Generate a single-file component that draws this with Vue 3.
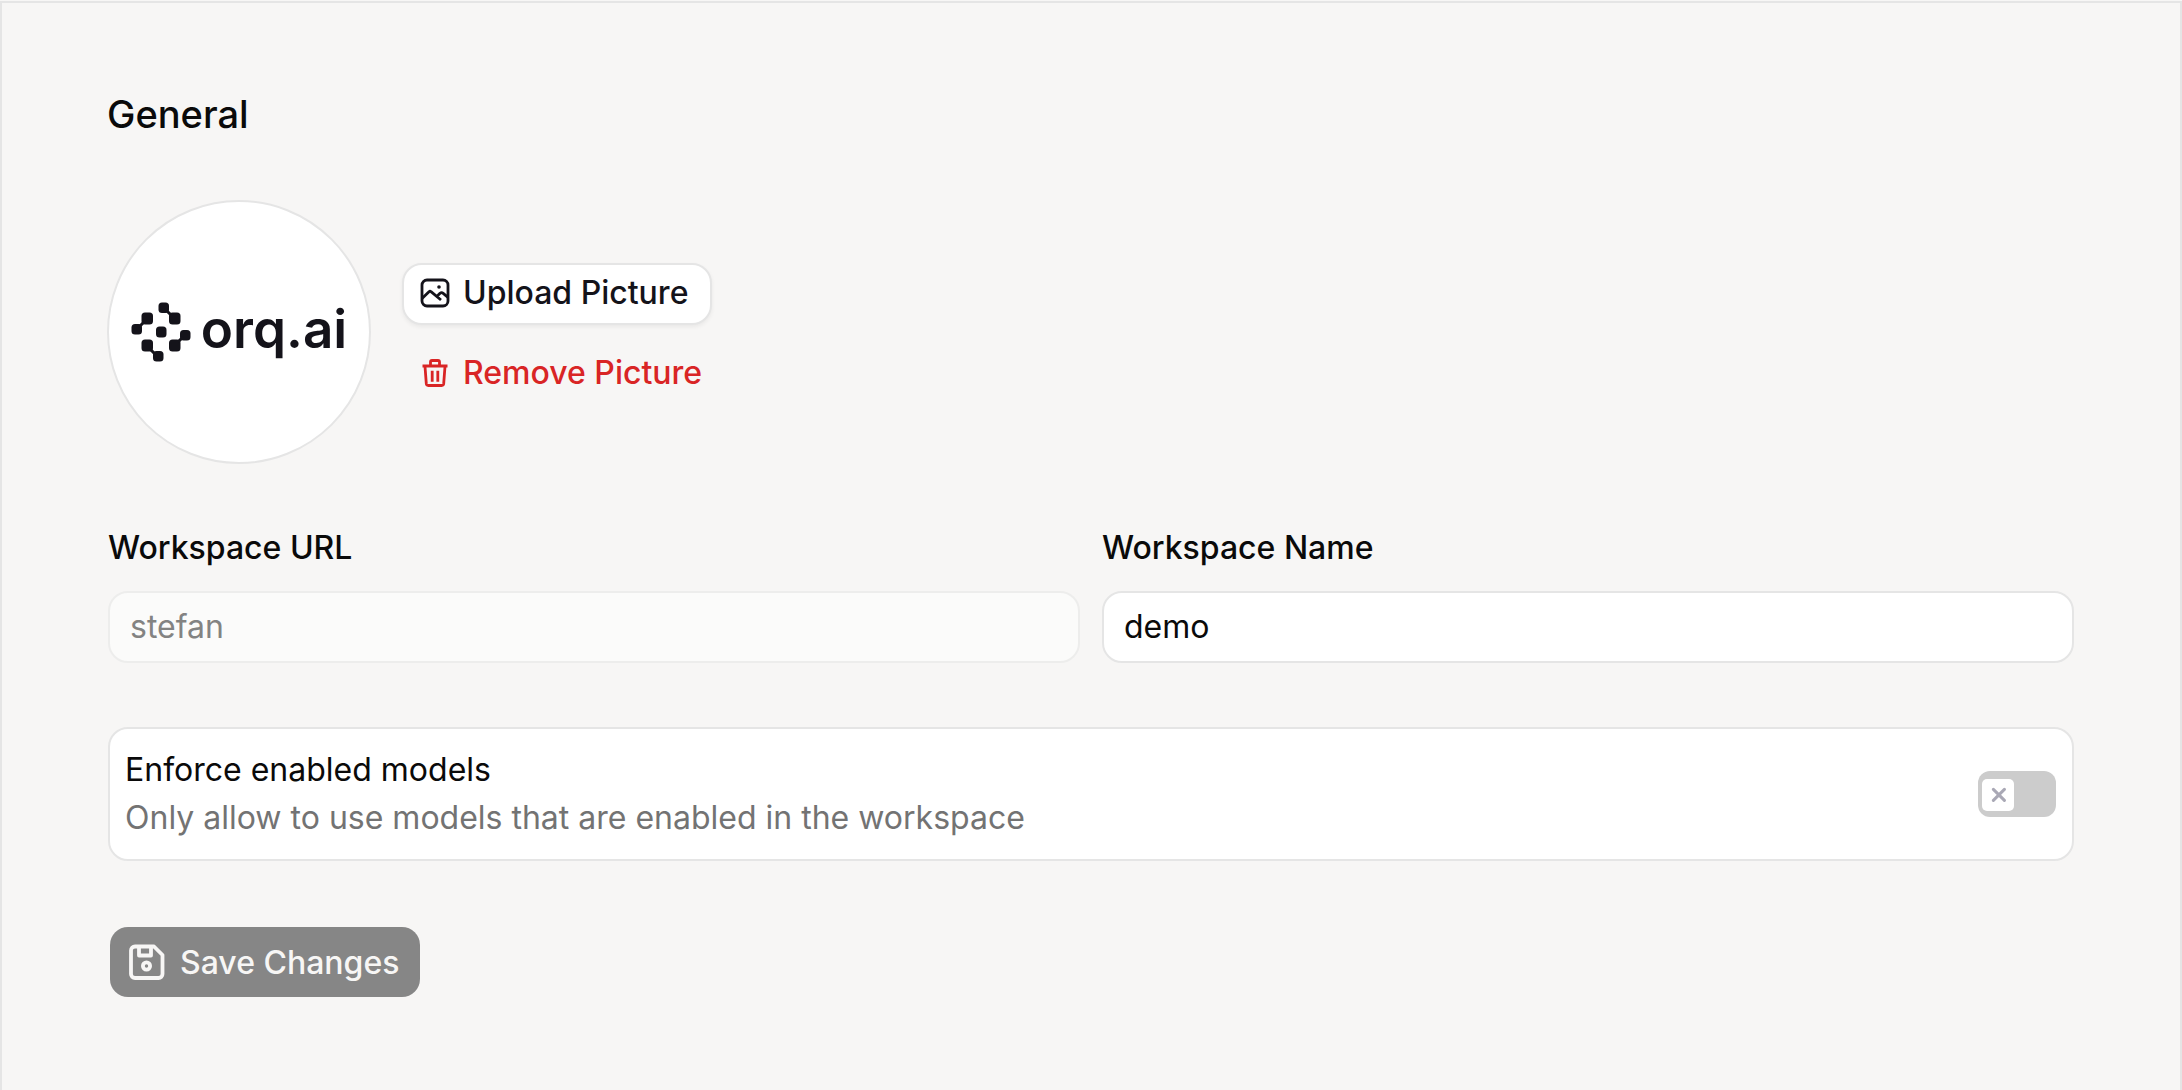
<template>
  <main class="settings">
    <h1 class="title">General</h1>

    <section class="picture">
      <div class="avatar">
        <div class="brand">
          <svg class="brand-mark" viewBox="0 0 60 60" aria-hidden="true">
            <g fill="currentColor" stroke="none">
              <rect x="27.5" y="0.5" width="10.5" height="10.5" rx="3.5" />
              <rect x="38" y="10.5" width="11.5" height="12" rx="3.5" />
              <rect x="10.5" y="10.5" width="11.5" height="12" rx="3.5" />
              <rect x="0.5" y="22" width="10.5" height="10.5" rx="3.5" />
              <rect x="25" y="24.5" width="10.5" height="11" rx="3.5" />
              <rect x="49" y="28" width="10.5" height="10.5" rx="3.5" />
              <rect x="38" y="37.5" width="11.5" height="12" rx="3.5" />
              <rect x="10.5" y="37.5" width="11.5" height="12" rx="3.5" />
              <rect x="22" y="49" width="10.5" height="10.5" rx="3.5" />
            </g>
            <path
              d="M35.5 8.5l5 5M13 20l-5 5M19 47l5 5M47 40l5-5"
              fill="none"
              stroke="currentColor"
              stroke-width="3"
            />
          </svg>
          <span class="brand-name">orq.ai</span>
        </div>
      </div>

      <div class="picture-actions">
        <button type="button" class="btn upload-btn">
          <svg viewBox="0 0 32 32" class="icon" aria-hidden="true">
            <rect x="3" y="3" width="26" height="26" rx="5" />
            <path d="M3 21.500l7-6.800a1.500 1.500 0 0 1 2 0L22 23M18.500 18.800l2.500-2.500a2.500 2.500 0 0 1 3.200 0l4.800 4" />
            <circle cx="20" cy="10" r="1.800" class="dot" />
          </svg>
          Upload Picture
        </button>
        <button type="button" class="btn remove-btn">
          <svg viewBox="0 0 32 32" class="icon" aria-hidden="true">
            <path d="M3.500 9h25M11.500 8.500V5a1.500 1.500 0 0 1 1.500-1.500h6A1.500 1.500 0 0 1 20.500 5v3.500M6 9.500l1.300 17.200a2 2 0 0 0 2 1.800h13.400a2 2 0 0 0 2-1.800L26 9.500M13.200 13.700v11M18.800 13.700v11" />
          </svg>
          Remove Picture
        </button>
      </div>
    </section>

    <form class="form" @submit.prevent>
      <div class="fields">
        <div class="field">
          <label for="workspace-url">Workspace URL</label>
          <input id="workspace-url" v-model="workspace.url" type="text" disabled />
        </div>
        <div class="field">
          <label for="workspace-name">Workspace Name</label>
          <input id="workspace-name" v-model="workspace.name" type="text" />
        </div>
      </div>

      <div class="option">
        <label for="enforce-models" class="option-text">
          <span class="option-title">Enforce enabled models</span>
          <span class="option-hint">Only allow to use models that are enabled in the workspace</span>
        </label>
        <div class="toggle" :class="{ on: enforceModels }">
          <input id="enforce-models" v-model="enforceModels" type="checkbox" />
          <span class="knob">
            <svg v-if="!enforceModels" viewBox="0 0 16 16" class="cross" aria-hidden="true">
              <path d="M3.400 2.400l11 11M14.400 2.400l-11 11" />
            </svg>
          </span>
        </div>
      </div>

      <button type="submit" class="btn save-btn" disabled>
        <svg viewBox="0 0 40 40" class="save-icon" aria-hidden="true">
          <path d="M9 4.500h19l8.500 8.500V32a4 4 0 0 1-4 4H9a4 4 0 0 1-4-4V8.500a4 4 0 0 1 4-4z" />
          <path d="M13 5v8.500h12V5" />
          <circle cx="20.500" cy="24" r="3.600" />
        </svg>
        Save Changes
      </button>
    </form>
  </main>
</template>

<script setup>
import { reactive, ref } from 'vue';

const workspace = reactive({
  url: 'stefan',
  name: 'demo'
});

const enforceModels = ref(false);
</script>

<style>
body {
  background: #f7f6f5;
}
</style>

<style scoped>
.settings {
  box-sizing: border-box;
  min-height: calc(100vh - 1px);
  margin-top: 1px;
  padding: 89px 106px 64px 105px;
  border: 2px solid #e5e5e5;
  border-bottom: none;
  color: #0a0a0a;
  font-family: Inter, "Liberation Sans", sans-serif;
  font-size: 32px;
}

.title {
  margin: 0 0 64px;
  font-size: 38px;
  font-weight: 500;
  line-height: 44px;
}

.picture {
  display: flex;
  align-items: center;
  gap: 31px;
  margin-bottom: 64px;
}

.avatar {
  box-sizing: border-box;
  display: flex;
  align-items: center;
  justify-content: center;
  width: 264px;
  height: 264px;
  border: 2px solid #e5e5e5;
  border-radius: 50%;
  background: #fff;
}

.brand {
  display: flex;
  align-items: center;
  gap: 10px;
  color: #14131a;
}

.brand-mark {
  width: 60px;
  height: 60px;
}

.brand-name {
  padding-bottom: 6px;
  font-size: 53px;
  font-weight: 600;
  line-height: 60px;
}

.picture-actions {
  display: flex;
  flex-direction: column;
  align-items: flex-start;
  gap: 18px;
  padding-top: 4px;
}

.btn {
  display: inline-flex;
  align-items: center;
  box-sizing: border-box;
  border: 2px solid transparent;
  border-radius: 20px;
  font: inherit;
  font-weight: 500;
  white-space: nowrap;
  cursor: pointer;
}

.upload-btn,
.remove-btn {
  gap: 12px;
  height: 62px;
  padding: 0 22px 3px 15px;
}

.upload-btn {
  border-color: #e5e5e5;
  background: #fff;
  box-shadow: 0 2px 4px rgba(0, 0, 0, 0.06);
  color: #14131a;
}

.remove-btn {
  background: transparent;
  color: #d92525;
}

.icon {
  width: 32px;
  height: 32px;
  fill: none;
  stroke: currentColor;
  stroke-width: 2.8;
  stroke-linejoin: round;
}

.icon .dot {
  fill: currentColor;
  stroke: none;
}

.form {
  display: flex;
  flex-direction: column;
  align-items: stretch;
  gap: 64px;
  padding-left: 1px;
}

.fields {
  display: grid;
  grid-template-columns: 1fr 1fr;
  gap: 22px;
}

.field {
  display: flex;
  flex-direction: column;
  gap: 24px;
}

.field label {
  font-weight: 500;
  line-height: 39px;
}

.field input {
  box-sizing: border-box;
  width: 100%;
  height: 72px;
  padding: 0 20px 2px;
  border: 2px solid #e5e5e5;
  border-radius: 20px;
  background: #fff;
  color: #0a0a0a;
  font: inherit;
}

.field input:disabled {
  border-color: #ededec;
  background: #fbfbfa;
  color: #838382;
}

.option {
  display: flex;
  align-items: center;
  justify-content: space-between;
  padding: 17px 16px 17px 15px;
  border: 2px solid #e5e5e5;
  border-radius: 20px;
  background: #fff;
}

.option-text {
  display: flex;
  flex-direction: column;
  line-height: 48px;
}

.option-hint {
  color: #737373;
}

.toggle {
  position: relative;
  width: 78px;
  height: 46px;
}

.toggle input {
  appearance: none;
  display: block;
  width: 100%;
  height: 100%;
  margin: 0;
  border-radius: 12px;
  background: #ccc;
  cursor: pointer;
}

.toggle.on input {
  background: #14131a;
}

.knob {
  position: absolute;
  top: 8px;
  left: 4px;
  display: flex;
  align-items: center;
  justify-content: center;
  width: 32px;
  height: 32px;
  border-radius: 5px;
  background: #fff;
  pointer-events: none;
}

.toggle.on .knob {
  left: 42px;
}

.cross {
  width: 16px;
  height: 16px;
  fill: none;
  stroke: #a9a8b5;
  stroke-width: 3;
  stroke-linecap: round;
}

.save-btn {
  align-self: flex-start;
  gap: 14px;
  height: 74px;
  padding: 0 21px 0 16px;
  background: #868686;
  background-clip: padding-box;
  color: #f7f6f5;
}

.save-btn:disabled {
  cursor: default;
}

.save-icon {
  width: 40px;
  height: 40px;
  fill: none;
  stroke: currentColor;
  stroke-width: 3.8;
  stroke-linejoin: round;
}
</style>
